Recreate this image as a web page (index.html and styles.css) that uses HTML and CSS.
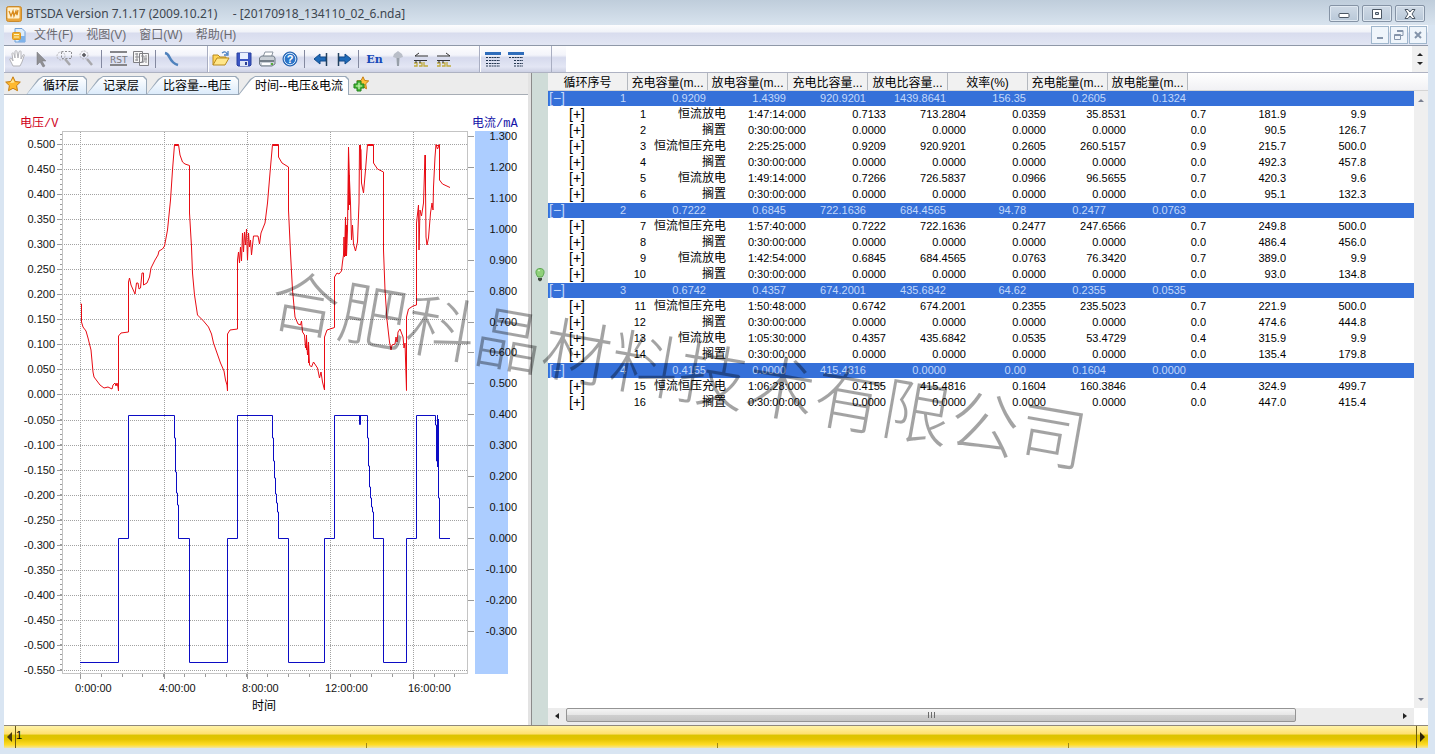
FILE: index.html
```html
<!DOCTYPE html>
<html lang="zh-CN">
<head>
<meta charset="utf-8">
<title>BTSDA Version 7.1.17</title>
<link rel="stylesheet" href="styles.css">
</head>
<body>
<header class="titlebar">
  <svg class="app-icon" viewBox="0 0 16 16"><rect x=".5" y=".5" width="15" height="15" rx="2" fill="#e9a53c" stroke="#c98a2e"/><rect x="1.500" y="1.500" width="12" height="11" rx="1" fill="#fff1cf"/><path d="M3 5l2 5 2-5 1 5 2-5 1 4 1-5" fill="none" stroke="#d88a1c" stroke-width="1.300"/></svg>
  <h1 class="title">BTSDA Version 7.1.17 (2009.10.21) &nbsp;&nbsp;&nbsp; - [20170918_134110_02_6.nda]</h1>
  <div class="win-buttons">
    <button class="win-btn" aria-label="最小化"><svg width="14" height="10" viewBox="0 0 14 10"><rect x="2" y="4.500" width="10" height="4" rx="1" fill="#fff" stroke="#4b5663"/></svg></button>
    <button class="win-btn" aria-label="最大化"><svg width="14" height="10" viewBox="0 0 14 10"><path d="M2.500.5h9v9h-9zM5.500 3.500h3v2h-3z" fill="#fff" fill-rule="evenodd" stroke="#4b5663"/></svg></button>
    <button class="win-btn" aria-label="关闭"><svg width="14" height="10" viewBox="0 0 14 10"><path d="M2 .5h3l2 2.500 2-2.500h3L9 5l3 4.500H9L7 7 5 9.500H2L5 5z" fill="#fff" stroke="#4b5663"/></svg></button>
  </div>
</header>

<div class="client">
  <nav class="menubar">
    <svg class="doc-icon" viewBox="0 0 14 15"><path d="M3 .5h7l3 3V14H3z" fill="#dcecfb" stroke="#6fa0d8"/><path d="M9 8h4v6H6z" fill="#7eb2ea"/><rect x=".5" y="4.500" width="8" height="7" rx="1" fill="#f0b32f" stroke="#dc9520"/><path d="M2 6.500h5M2 9h5" stroke="#fff3c4"/></svg>
    <button class="menu">文件(F)</button>
    <button class="menu">视图(V)</button>
    <button class="menu">窗口(W)</button>
    <button class="menu">帮助(H)</button>
    <div class="mdi-buttons">
      <button class="mdi-btn" aria-label="最小化文档"><svg width="12" height="12"><path d="M3 9h6" stroke="#8494aa" stroke-width="2"/></svg></button>
      <button class="mdi-btn" aria-label="还原文档"><svg width="12" height="12"><path d="M4 1.500h6v5H8M1.500 5.500h6v5h-6zM4 2.500h6M1.500 6.500h6" fill="none" stroke="#8494aa"/></svg></button>
      <button class="mdi-btn" aria-label="关闭文档"><svg width="12" height="12"><path d="M3 3l6 6M9 3l-6 6" stroke="#8494aa" stroke-width="2"/></svg></button>
    </div>
  </nav>

  <div class="toolbar">
    <div class="group group-view">
      <button class="tool" aria-label="平移"><svg viewBox="0 0 20 20"><path d="M5 17l-3-6c-1-2 1-2 2-1l1 2L4 5c0-2 2-1 2 0l1 4V3c0-2 2-2 2 0l1 6 1-6c1-2 2-1 2 0v7l2-4c1-1 2 0 1 1l-2 6-2 4z" fill="#fff" stroke="#b3b3b8"/></svg></button>
      <button class="tool" aria-label="选择"><svg viewBox="0 0 20 20"><path d="M6 3v13l3-3 3 5 2-1-3-5h4z" fill="#8f8f93" stroke="#77777b" stroke-width=".5"/></svg></button>
      <button class="tool" aria-label="框选放大"><svg viewBox="0 0 20 20"><rect x="7.500" y="2.500" width="10" height="7" fill="none" stroke="#8e8e92" stroke-dasharray="2 1.500"/><circle cx="7" cy="7" r="4" fill="none" stroke="#b8b8bc" stroke-dasharray="2 1"/><path d="M11 10l5 6" stroke="#a8a8ac" stroke-width="2.500"/></svg></button>
      <button class="tool" aria-label="放大"><svg viewBox="0 0 20 20"><circle cx="7" cy="6" r="4" fill="none" stroke="#b8b8bc" stroke-dasharray="2 1"/><path d="M5 6h4M7 4v4" stroke="#55555a" stroke-width="1.500"/><path d="M10 10l5 6" stroke="#a8a8ac" stroke-width="2.500"/></svg></button>
      <span class="sep"></span>
      <button class="tool" aria-label="RST"><svg viewBox="0 0 20 20"><path d="M2 3h17M2 16h17" stroke="#858589" stroke-width="2"/><text class="icon-rst" x="2" y="14">RST</text></svg></button>
      <button class="tool" aria-label="复制图形"><svg viewBox="0 0 20 20"><path d="M2.500 2.500h9v11h-9zM8.500 4.500h9v12h-9z" fill="#f7f7f7" stroke="#7f7f83"/><path d="M4 5h3M4 8h4M4 11h3M10 7h3v3h3M10 13h3v-3M6 4v8M15 6v8" fill="none" stroke="#8f8f93"/></svg></button>
      <span class="sep"></span>
      <button class="tool" aria-label="曲线"><svg viewBox="0 0 20 20"><path d="M3 4c6 1 3 9 13 12" fill="none" stroke="#4f82bd" stroke-width="2.600"/></svg></button>
    </div>
    <div class="group group-file">
      <button class="tool" aria-label="打开"><svg viewBox="0 0 20 20"><path d="M2 16V6h5l2 2h6v3" fill="#ffd55a" stroke="#b98a1c"/><path d="M2 16l4-7h12l-4 7z" fill="#ffe68a" stroke="#b98a1c"/><path d="M11 4c3-2 4-1 5 1M17 2v4h-4" fill="none" stroke="#4a7fc2" stroke-width="1.300"/></svg></button>
      <button class="tool" aria-label="保存"><svg viewBox="0 0 20 20"><path d="M3 4h14v12l-1 1H4l-1-1z" fill="#3b55c4" stroke="#29409e"/><path d="M6 4h8v6H6z" fill="#e9efff"/><path d="M6 12h8v5H6z" fill="#dfe6f6"/><path d="M11 13h2v3h-2z" fill="#2b3f94"/></svg></button>
      <button class="tool" aria-label="打印"><svg viewBox="0 0 20 20"><path d="M6 8l2-5h8l-2 6" fill="#fff" stroke="#8a94a0"/><path d="M2.500 9l2-2h12l1.500 2v6l-3 2h-11l-1.500-2z" fill="#c9cfd6" stroke="#6f7a85"/><path d="M3 12h14" stroke="#59656f" stroke-width="1.500"/><path d="M5 15h8" stroke="#fff" stroke-width="2"/><path d="M14 15h2" stroke="#55ad3a" stroke-width="2"/></svg></button>
      <button class="tool" aria-label="帮助"><svg viewBox="0 0 20 20"><circle cx="10" cy="10" r="7" fill="#2b75c9" stroke="#1c59a6"/><circle cx="10" cy="10" r="5.800" fill="none" stroke="#cfe2f8"/><text class="icon-help" x="10" y="14" text-anchor="middle">?</text></svg></button>
      <span class="sep"></span>
      <button class="tool" aria-label="上一个"><svg viewBox="0 0 20 20"><path d="M3 10l6-5v3h6v4H9v3z" fill="#1f6ab8" stroke="#134b8a"/><path d="M15.500 4v13" stroke="#23405f" stroke-width="1.500"/></svg></button>
      <button class="tool" aria-label="下一个"><svg viewBox="0 0 20 20"><path d="M17 10l-6-5v3H5v4h6v3z" fill="#1f6ab8" stroke="#134b8a"/><path d="M4.500 4v13" stroke="#23405f" stroke-width="1.500"/></svg></button>
      <span class="sep"></span>
      <button class="tool tool-en">En</button>
      <button class="tool" aria-label="标记"><svg viewBox="0 0 20 20"><path d="M10 2l4 3 1 3-3 1-1 8H9L8 9 5 8l1-3z" fill="#b9bec8"/><path d="M10 9v8" stroke="#8d949f" stroke-width="1.500"/></svg></button>
      <button class="tool" aria-label="左移"><svg viewBox="0 0 20 20"><path d="M8 4L4 7h13M3 11.500h13" fill="none" stroke="#333"/><path d="M3 17h3v-3H3M8 14h3v3H8M13 13v4h4" fill="none" stroke="#c0ab3c" stroke-width="1.300"/><path d="M4 13h2M8 13h2" stroke="#333"/></svg></button>
      <button class="tool" aria-label="右移"><svg viewBox="0 0 20 20"><path d="M12 4l4 3H3M3 11.500h13" fill="none" stroke="#333"/><path d="M3 17h3v-3H3M8 14h3v3H8M13 13v4h4" fill="none" stroke="#c0ab3c" stroke-width="1.300"/><path d="M4 13h2M8 13h2" stroke="#333"/></svg></button>
    </div>
    <div class="group group-list">
      <button class="tool" aria-label="列表"><svg viewBox="0 0 20 20"><path d="M2 4.500h16" stroke="#2f6dbb" stroke-width="3"/><path d="M3 8.500h2M6 8.500h11M3 11.500h2M6 11.500h11M3 14.500h2M6 14.500h11M3 17h2M6 17h11" stroke="#23364f" stroke-dasharray="2 .6"/></svg></button>
      <button class="tool" aria-label="分级列表"><svg viewBox="0 0 20 20"><path d="M2 4.500h16" stroke="#2f6dbb" stroke-width="3"/><path d="M3 8.500h2M6 8.500h11M8 11.500h2M11 11.500h6M8 14.500h2M11 14.500h6M8 17h2M11 17h6" stroke="#23364f" stroke-dasharray="2 .6"/></svg></button>
    </div>
    <div class="group-gap"></div>
    <div class="message-box"></div>
    <div class="spinner">
      <button class="spin" aria-label="向上"><svg width="8" height="4"><path d="M1 4l3-3 3 3z" fill="#222"/></svg></button>
      <button class="spin" aria-label="向下"><svg width="8" height="4"><path d="M1 0l3 3 3-3z" fill="#222"/></svg></button>
    </div>
  </div>

  <main class="workspace">
    <section class="chart-pane">
      <div class="tabs">
        <button class="star" aria-label="收藏"><svg width="16" height="16" viewBox="0 0 16 16"><path d="M8 .8l2.200 4.700 5.100.6-3.700 3.500.9 5.100L8 12.300l-4.500 2.400.9-5.100L.7 6.100l5.100-.6z" fill="#ffb92e" stroke="#c57d12"/><path d="M8 3l1.500 3.500L5 7z" fill="#ffe79a"/></svg></button>
        <button class="tab">循环层</button>
        <button class="tab">记录层</button>
        <button class="tab">比容量--电压</button>
        <button class="tab tab-active">时间--电压&amp;电流</button>
        <button class="star" aria-label="添加收藏"><svg width="16" height="16" viewBox="0 0 16 16"><path d="M10 .8l1.700 3.700 4 .4-3 2.900.8 5-3.500-2-4 2 .8-5-3-2.900 4.300-.4z" fill="#ffc13a" stroke="#c57d12"/><path d="M4 5h4v3h3v4H8v3H4v-3H1V8h3z" fill="#4dbb3a" stroke="#21801b"/><path d="M6 7v6M3 10h6" stroke="#c9f3b4" stroke-width="1.200"/></svg></button>
      </div>
      <svg class="chart" id="chart" viewBox="4 95 524 628" role="img" aria-label="时间--电压&amp;电流">
        <rect x="475" y="131" width="33" height="543" fill="#accdff"/>
        <g id="grid" class="grid"></g>
        <rect class="frame" x="62.500" y="131.500" width="405" height="542"/>
        <g id="ticks" class="ticks"></g>
        <g id="labels" class="labels"></g>
        <text class="axis-v" x="20" y="127">电压/V</text>
        <text class="axis-c" x="472" y="127">电流/mA</text>
        <text class="axis-t" x="252" y="710">时间</text>
        <path class="curve-c" d="M80 662.500H118.500V538.500H128.500V415.500H174.500V438H175.500V472H176.500V493H177.500V505H178.500V538.500H189.500V662.500H227.500V538.500H237.500V415.500H272.500V438H273.500V461H274.500V478H275.500V494H276.500V503H277.500V512H278.500V538.500H288.500V662.500H324.500V538.500H334.500V415.500H367.500V438H368.500V466H369.500V487H370.500V498H371.500V507H372.500V512H373.500V538.500H383.500V662.500H406.500V538.500H416.500V415.500H435.500V425H436.500V461H437.500V415V467L438.500 419V498H439.500V538.500H450"/>
        <path class="curve-c" d="M359.500 415V424.500H360.500V415"/>
        <path class="curve-v" d="M80.500 304H81.500V322L83 327 86 331 88 338 91 350 93 372 94 377 100 385 104 388 108 387 112 389 113 385 115 383 116 386 117 383 118 387 118.500 391V336L121 333 128.500 332V282L129.500 278 131 285 135 294 136.500 283H138L139 289 140.500 288 142 273H143.500V285L147 283 149.500 277 151 268 155 260 158 255 159 251 162.500 249 164.500 246 167.500 230 170.500 200 172.500 170 174.500 144.500H178.500L180 155 182.500 162 185 164 189.500 165.500V213L191.500 247 192.500 273 194.500 295 197.500 315 203.500 321 208.500 327 211.500 334 213.500 343 220.500 363 224 371 225.500 380 227 385 227.500 391V334L230 330 237.500 329V260L238.500 252 239.500 263 240.500 247 241.500 261 242.500 233 243.500 252 244.500 232 245.500 245 246.500 229 247.500 260 248.500 233 249.500 247 250.500 240 251.500 255 253.500 236H258L259.500 244 261 233 265 223 267.500 203 270.500 167 272.500 144.500H278.500V157L282 163 288.500 167V210L290.500 253 292.500 290 295 317 298 324 300.500 325 301.500 321 302.500 332 304.500 335 305.500 348 306.500 337 307.500 355 308.500 342 309.500 365 311.500 367 313.500 362 317.500 368 319.500 378 321 372 322.500 382 324.500 390V337L327 330 334.500 327.500V277L337 273 339 274 341.500 271 342.500 262 343.500 255 344 237 344.500 257 345.500 217 346.500 256 347.500 230 348.500 147 349.500 180 350.500 203 351.500 240 352.500 225 353.500 244 355.500 251 357.500 242 359 203 359.500 145 361 150 361.500 183 363.500 193 365.500 170 367.500 144.500H373.500V163L377.500 169 383.500 172V250L385 290 387 320 389.500 342 391 350 392 345 395 344 396 337 397 342 398 332 400 329 403 337 404 348 405 343 406.500 390.500V317L408.500 309 413 306 416.500 305V223L418.500 205 419 250 420 210 421.500 216 423.500 203 425 155 425.500 187 426 237 427 245 428.500 238 430.500 213 432 203 433 210 433.500 187 435 157 436 144.500 437.500 149 439.500 144.500V180L442.500 184 450 187.500"/>
        <path class="curve-v" d="M345.500 220V256M346.500 225V255M348.500 150V210M349.500 175V205M360.500 145V170M425.500 155V190M306.500 335V350M308.500 343V363M174 145.500H178.500M273 145.500H278M367 145.500H373M436 145.500H439"/>
      </svg>
    </section>

    <div class="splitter">
      <svg class="bulb" width="10" height="14" viewBox="0 0 10 14"><path d="M5 .5c5 0 5 5 2 8.500H3C0 5.500 0 .5 5 .5z" fill="#8fd07a" stroke="#5aa54e"/><path d="M3.500 3l1-1" stroke="#e0fad0" stroke-width="1.500"/><path d="M3 10h4v2L5 13.500 3 12z" fill="#3f4a3f"/></svg>
    </div>

    <section class="data-pane">
      <div class="data-head-wrap">
        <div class="data-view">
          <table class="data">
            <thead><tr><th>循环序号</th><th>充电容量(m...</th><th>放电容量(m...</th><th>充电比容量...</th><th>放电比容量...</th><th>效率(%)</th><th>充电能量(m...</th><th>放电能量(m...</th></tr></thead>
            <tbody id="rows"></tbody>
          </table>
        </div>
        <div class="vscroll">
          <button class="scroll-btn" aria-label="向上滚动"><svg width="8" height="4"><path d="M1 4l3-3 3 3z" fill="#7a8090"/></svg></button>
          <button class="scroll-btn" aria-label="向下滚动"><svg width="8" height="4"><path d="M1 0l3 3 3-3z" fill="#7a8090"/></svg></button>
        </div>
      </div>
      <div class="hscroll">
        <button class="hscroll-btn" aria-label="向左滚动"><svg width="4" height="8"><path d="M4 1L0 4l4 3z" fill="#222"/></svg></button>
        <div class="htrack"><div class="hthumb"><svg width="9" height="6"><path d="M1.500 0v6M4.500 0v6M7.500 0v6" stroke="#6c6c6c"/></svg></div></div>
        <button class="hscroll-btn" aria-label="向右滚动"><svg width="4" height="8"><path d="M0 1l4 3-4 3z" fill="#222"/></svg></button>
      </div>
    </section>
  </main>

  <footer class="timeline">
    <button class="time-btn" aria-label="向前"><svg width="5" height="10"><path d="M5 0L0 5l5 5z" fill="#4a3c10"/></svg></button>
    <div class="time-track">1</div>
    <button class="time-btn" aria-label="向后"><svg width="5" height="10"><path d="M0 0l5 5-5 5z" fill="#2e2408"/></svg></button>
  </footer>
</div>

<div class="watermark">合肥科晶材料技术有限公司</div>
<script src="app.js"></script>
</body>
</html>
```

FILE: styles.css
```css
* { box-sizing: border-box; }
body {
  margin: 0;
  height: 100vh;
  display: flex;
  flex-direction: column;
  overflow: hidden;
  position: relative;
  background: #d9e5f2;
  font: 12px/16px "Liberation Sans", "Noto Sans CJK SC", sans-serif;
  color: #000;
}
button {
  font: inherit;
  color: inherit;
  border: 0;
  padding: 0;
  background: none;
  display: flex;
  align-items: center;
  justify-content: center;
}

/* window caption */
.titlebar {
  flex: none;
  height: 25px;
  display: flex;
  align-items: center;
  gap: 4px;
  padding: 2px 10px 0 6px;
  background: linear-gradient(#bfcddb, #d8e3ee);
}
.app-icon { width: 16px; height: 16px; }
.title {
  flex: 1;
  margin: 0;
  font: 12px/16px "Noto Sans", "Open Sans", sans-serif;
  color: #3d4650;
}
.win-buttons { display: flex; gap: 3px; }
.win-btn {
  width: 30px;
  height: 17px;
  border: 1px solid #8593a5;
  border-radius: 2px;
  background: linear-gradient(#cfdae6, #b9c8d8);
  box-shadow: inset 0 0 0 1px #dfe8f1;
}

.client {
  flex: 1;
  min-height: 0;
  display: flex;
  flex-direction: column;
  margin: 0 7px 6px 4px;
}

/* menu */
.menubar {
  flex: none;
  height: 21px;
  display: flex;
  align-items: center;
  gap: 13px;
  padding-left: 8px;
  border-bottom: 1px solid #8f98a8;
  background: linear-gradient(#fdfdfe 0, #f0f2f8 35%, #d8dcee 40%, #e2e6f3 100%);
  color: #6a6a70;
}
.doc-icon { width: 14px; height: 15px; margin-right: -5px; }
.mdi-buttons { display: flex; gap: 1px; margin-left: auto; padding-right: 1px; }
.mdi-btn {
  width: 18px;
  height: 18px;
  border: 1px solid #9fb6cc;
  background: #eff5fb;
}

/* toolbar */
.toolbar {
  flex: none;
  height: 27px;
  display: flex;
  border-bottom: 1px solid #aeb2c2;
  background: linear-gradient(#fdfdfe 0, #f3f4fa 35%, #d6daed 45%, #e3e6f4 80%, #cdd1e4 100%);
}
.group {
  display: flex;
  align-items: center;
  border-right: 1px solid #a9aec2;
  box-shadow: inset 1px 0 #fff;
}
.group-view { width: 204px; padding-left: 2px; }
.group-file { width: 272px; padding-left: 1px; }
.group-list { width: 72px; padding-left: 1px; }
.group-gap { width: 14px; }
.tool { width: 23px; height: 24px; }
.tool svg { width: 20px; height: 20px; }
.tool-en { font: bold 11px "DejaVu Serif", serif; color: #1547b8; }
.icon-rst { font: 9px "DejaVu Sans", sans-serif; fill: #77777b; }
.icon-help { font: bold 11px "Liberation Sans", sans-serif; fill: #fff; }
.sep { width: 1px; height: 18px; margin: 0 4px 0 3px; background: #8489a0; }
.message-box { flex: 1; background: #fff; }
.spinner {
  width: 16px;
  display: flex;
  flex-direction: column;
  justify-content: center;
  gap: 2px;
  background: #f0f0f0;
}
.spin { height: 8px; }

/* work area */
.workspace { flex: 1; min-height: 0; display: flex; background: #fff; }
.chart-pane {
  flex: 0 0 528px;
  border-right: 1px solid #8b8b8b;
  box-shadow: inset -3px 0 #e3e3e3;
}
.tabs {
  height: 22px;
  display: flex;
  align-items: flex-end;
  margin-right: 3px;
  background: linear-gradient(#ececec, #ececec 21px, #a7adb5 21px);
}
.star { width: 22px; height: 22px; padding-right: 4px; }
.star:last-child { width: 26px; padding: 0; }
.tab {
  position: relative;
  z-index: 0;
  height: 19px;
  padding: 0 8px 0 17px;
  margin-right: -1px;
  white-space: nowrap;
  background: #9aa9b9;
  clip-path: polygon(0 100%, 12px 3px, 17px 0, calc(100% - 3px) 0, 100% 3px, 100% 100%);
}
.tab::before {
  content: "";
  position: absolute;
  z-index: -1;
  inset: 1px 1px 1px 1px;
  background: linear-gradient(#fff, #dcebfa);
  clip-path: polygon(0 100%, 12px 3px, 16px 0, calc(100% - 3px) 0, 100% 3px, 100% 100%);
}
.tab-active { padding-right: 6px; }
.tab-active::before { background: #fff; bottom: 0; }

.chart { display: block; width: 524px; max-width: 100%; }
.grid { stroke: #a2a2a2; stroke-dasharray: 1 1; }
.frame { fill: none; stroke: #c4c4c4; }
.ticks { stroke: #9a9a9a; }
.labels { font: 11px "Liberation Sans", sans-serif; fill: #111; }
.axis-v, .axis-c { font: 12px "Liberation Mono", "Noto Sans CJK SC", monospace; }
.axis-v { fill: #d0021b; }
.axis-c { fill: #1414a8; }
.axis-t { font: 12px "Noto Sans CJK SC", sans-serif; }
.curve-c, .curve-v { fill: none; }
.curve-c { stroke: #0c0cc4; }
.curve-v { stroke: #e80c14; }

.splitter {
  flex: 0 0 16px;
  display: flex;
  justify-content: center;
  background: #cfdcd8;
}
.bulb { margin-top: 195px; }

.data-pane { flex: 1; min-width: 0; display: flex; flex-direction: column; }
.data-head-wrap { flex: 1; min-height: 0; display: flex; background: #fff; }
.data-view { flex: 1; min-width: 0; }
.data, .data tbody, .data thead { display: block; }
.data tr { display: flex; }
.data thead tr {
  height: 18px;
  margin-right: -14px;
  background: linear-gradient(#fff, #f1f1f4);
  border-bottom: 1px solid #d5d5d5;
}
.data th {
  flex: 0 0 80px;
  padding: 0;
  font-weight: 400;
  line-height: 20px;
  text-align: center;
  white-space: nowrap;
  background: #f1f1f1;
  border-right: 1px solid #b4b8be;
}
.data tbody tr { height: 16px; font-size: 11px; line-height: 15px; border-bottom: 1px solid #fff; }
.data td {
  flex: 0 0 80px;
  padding: 0 2px 0 0;
  text-align: right;
  white-space: nowrap;
}
.data td:first-child { display: flex; justify-content: space-between; }
.data .cycle { background: #3570d9; color: #c3d8fa; }
.data .step { padding-left: 20px; }
.data .mode { font-size: 12px; }
.toggle { font-size: 14px; line-height: 15px; padding-left: 1px; }

.vscroll {
  width: 14px;
  margin-top: 18px;
  display: flex;
  flex-direction: column;
  justify-content: space-between;
  background: #efefef;
}
.scroll-btn { height: 17px; width: 14px; }
.hscroll { flex: none; height: 17px; display: flex; margin-right: 14px; background: #ececec; }
.hscroll-btn { width: 18px; height: 15px; }
.htrack { flex: 1; }
.hthumb {
  width: 88%;
  height: 14px;
  display: flex;
  align-items: center;
  justify-content: center;
  border: 1px solid #949494;
  border-radius: 2px;
  background: linear-gradient(#f5f5f5, #e6e6e6 48%, #cfcfcf 52%, #c4c4c4);
}

/* time bar */
.timeline {
  flex: none;
  height: 23px;
  display: flex;
  border-top: 1px solid #8f887c;
  background: linear-gradient(#fff3a8 0, #ffe070 36%, #dcc400 42%, #e4c400 60%, #ffdc28 85%, #f2e5a0 100%);
}
.time-btn { width: 11px; height: 22px; }
.time-track {
  flex: 1;
  border-left: 1px solid #6a5a10;
  border-right: 1px solid #6a5a10;
  line-height: 18px;
  font-size: 11px;
  background: repeating-linear-gradient(to right, transparent 0 350px, #a08818 350px 351px) 0 100% / 1100px 5px no-repeat;
}

.watermark {
  position: absolute;
  left: 272px;
  top: 244px;
  font: 300 69px/100px "Noto Sans CJK SC", sans-serif;
  color: rgba(0, 0, 0, 0.36);
  white-space: nowrap;
  transform: rotate(10deg);
  transform-origin: 0 50%;
  pointer-events: none;
}
```

FILE: app.js
```js
// Cycle rows start with "c"; step rows start with "s".
const rows = `c 1 0.9209 1.4399 920.9201 1439.8641 156.35 0.2605 0.1324
s 1 恒流放电 1:47:14:000 0.7133 713.2804 0.0359 35.8531 0.7 181.9 9.9
s 2 搁置 0:30:00:000 0.0000 0.0000 0.0000 0.0000 0.0 90.5 126.7
s 3 恒流恒压充电 2:25:25:000 0.9209 920.9201 0.2605 260.5157 0.9 215.7 500.0
s 4 搁置 0:30:00:000 0.0000 0.0000 0.0000 0.0000 0.0 492.3 457.8
s 5 恒流放电 1:49:14:000 0.7266 726.5837 0.0966 96.5655 0.7 420.3 9.6
s 6 搁置 0:30:00:000 0.0000 0.0000 0.0000 0.0000 0.0 95.1 132.3
c 2 0.7222 0.6845 722.1636 684.4565 94.78 0.2477 0.0763
s 7 恒流恒压充电 1:57:40:000 0.7222 722.1636 0.2477 247.6566 0.7 249.8 500.0
s 8 搁置 0:30:00:000 0.0000 0.0000 0.0000 0.0000 0.0 486.4 456.0
s 9 恒流放电 1:42:54:000 0.6845 684.4565 0.0763 76.3420 0.7 389.0 9.9
s 10 搁置 0:30:00:000 0.0000 0.0000 0.0000 0.0000 0.0 93.0 134.8
c 3 0.6742 0.4357 674.2001 435.6842 64.62 0.2355 0.0535
s 11 恒流恒压充电 1:50:48:000 0.6742 674.2001 0.2355 235.5023 0.7 221.9 500.0
s 12 搁置 0:30:00:000 0.0000 0.0000 0.0000 0.0000 0.0 474.6 444.8
s 13 恒流放电 1:05:30:000 0.4357 435.6842 0.0535 53.4729 0.4 315.9 9.9
s 14 搁置 0:30:00:000 0.0000 0.0000 0.0000 0.0000 0.0 135.4 179.8
c 4 0.4155 0.0000 415.4816 0.0000 0.00 0.1604 0.0000
s 15 恒流恒压充电 1:06:28:000 0.4155 415.4816 0.1604 160.3846 0.4 324.9 499.7
s 16 搁置 0:30:00:000 0.0000 0.0000 0.0000 0.0000 0.0 447.0 415.4`;

document.getElementById("rows").innerHTML = rows.split("\n").map(line => {
  const [kind, no, ...cells] = line.split(" ");
  const cycle = kind === "c";
  const first = `<td><button class="toggle">${cycle ? "[−]" : "[+]"}</button>${no}</td>`;
  const rest = cells.map((c, i) => `<td${!cycle && i === 0 ? ' class="mode"' : ""}>${c}</td>`).join("");
  return `<tr class="${cycle ? "cycle" : "step"}">${first}${rest}</tr>`;
}).join("");

// Chart axes
let grid = "", ticks = "", labels = "";
for (let i = 0; i <= 21; i++) {
  const y = 144.5 + i * 25 + (i > 10 ? 1 : 0);
  grid += `<path d="M64 ${y}H467"/>`;
  ticks += `<path d="M57 ${y}H62"/>`;
  labels += `<text x="55" y="${y + 3.5}" text-anchor="end">${(0.5 - i * 0.05).toFixed(3).replace("-0.000", "0.000")}</text>`;
}
for (let y = 134.5; y < 672; y += 5) ticks += `<path d="M60 ${y}H62"/>`;
[80.5, 164.5, 247.5, 330.5, 413.5].forEach((x, i) => {
  grid += `<path d="M${x} 132V673"/>`;
  ticks += `<path d="M${x} 674V679"/>`;
  labels += `<text x="${x - 5.5}" y="692">${i * 4}:00:00</text>`;
});
for (let i = 0; i < 19; i++) ticks += `<path d="M${Math.round(80 + i * 20.8) + 0.5} 674V677"/>`;
for (let i = 0; i <= 16; i++) {
  const y = Math.round(136 + i * 30.92) + 0.5;
  ticks += `<path d="M468 ${y}H474"/>`;
  labels += `<text x="517" y="${y + 3.5}" text-anchor="end">${(1.3 - i * 0.1).toFixed(3).replace("-0.000", "0.000")}</text>`;
}
document.getElementById("grid").innerHTML = grid;
document.getElementById("ticks").innerHTML = ticks;
document.getElementById("labels").innerHTML = labels;
```
